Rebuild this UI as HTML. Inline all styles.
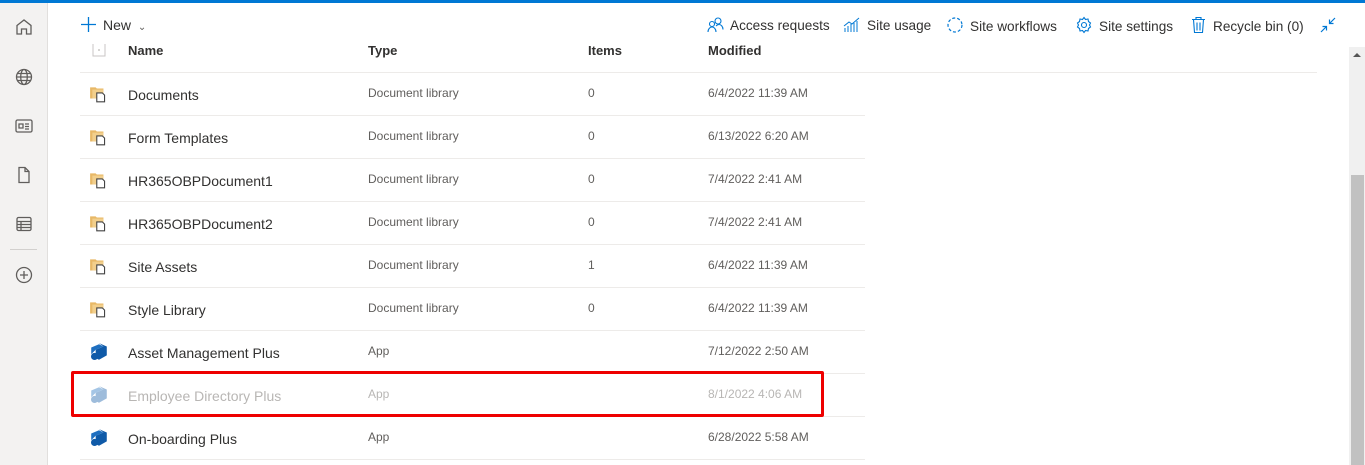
<!DOCTYPE html>
<html><head><style>
*{margin:0;padding:0;box-sizing:border-box}
body{width:1365px;height:465px;overflow:hidden;background:#fff;font-family:"Liberation Sans",Arial,sans-serif;color:#323130;position:relative}
.top{position:absolute;left:0;top:0;width:1365px;height:3px;background:#0078d4}
.side{position:absolute;left:0;top:3px;width:48px;height:462px;background:#f3f2f1;border-right:1px solid #e1dfdd}
.side svg{position:absolute;left:14px}
.cmd{position:absolute;top:16px;font-size:13.6px;color:#323130;white-space:nowrap}
.cmd svg{vertical-align:-3px;margin-right:6px}
.hdr{position:absolute;top:43px;font-size:13px;font-weight:bold;color:#323130}
.line{position:absolute;left:80px;height:1px;background:#edebe9}
.row{position:absolute;left:80px;width:785px;height:43px}
.row .n{position:absolute;left:48px;top:14px;font-size:14px}
.row .t{position:absolute;left:288px;top:13px;font-size:12px;color:#605e5c}
.row .i{position:absolute;left:508px;top:13px;font-size:12px;color:#605e5c}
.row .m{position:absolute;left:628px;top:13px;font-size:12px;color:#605e5c}
.row .ic{position:absolute;left:9px;top:11px}
.dim .n,.dim .t,.dim .m{color:#b8b6b4}
</style></head><body>
<div class="top"></div>
<div class="side">
<svg style="top:14px" width="20" height="20" viewBox="0 0 20 20" fill="none" stroke="#605e5c" stroke-width="1.3"><path d="M3 8.5L10 3l7 5.5V17h-4.5v-5h-5v5H3z"/></svg>
<svg style="top:64px" width="20" height="20" viewBox="0 0 20 20" fill="none" stroke="#605e5c" stroke-width="1.3"><circle cx="10" cy="10" r="7.5"/><ellipse cx="10" cy="10" rx="3.3" ry="7.5"/><path d="M2.5 10h15M3.5 6.5h13M3.5 13.5h13"/></svg>
<svg style="top:113px" width="20" height="20" viewBox="0 0 20 20" fill="none" stroke="#605e5c" stroke-width="1.3"><rect x="2" y="4" width="16" height="12" rx="1.5"/><path d="M5 8h4v4H5zM11 8h4M11 10.5h4M11 13h4"/></svg>
<svg style="top:162px" width="20" height="20" viewBox="0 0 20 20" fill="none" stroke="#605e5c" stroke-width="1.3"><path d="M5 2.5h6l4 4v11H5z"/><path d="M11 2.5v4h4"/></svg>
<svg style="top:211px" width="20" height="20" viewBox="0 0 20 20" fill="none" stroke="#605e5c" stroke-width="1.3"><rect x="3" y="3.5" width="14" height="13" rx="1.5"/><path d="M3 7.5h14M3 10.5h14M3 13.5h14M7 7.5v9"/></svg>
<div style="position:absolute;left:10px;top:246px;width:27px;height:1px;background:#d2d0ce"></div>
<svg style="top:262px" width="20" height="20" viewBox="0 0 20 20" fill="none" stroke="#605e5c" stroke-width="1.3"><circle cx="10" cy="10" r="7.5"/><path d="M10 6v8M6 10h8"/></svg>
</div>
<div class="cmd" style="left:80px;font-size:14px"><svg width="17" height="17" viewBox="0 0 17 17" stroke="#0078d4" stroke-width="1.3"><path d="M8.5 1v15M1 8.5h15"/></svg>New <span style="font-size:10px;color:#605e5c;margin-left:3px">&#8964;</span></div>
<div class="cmd" style="left:707px"><svg width="17" height="17" viewBox="0 0 17 17" fill="none" stroke="#0078d4" stroke-width="1.1"><circle cx="11" cy="5" r="3"/><circle cx="5" cy="8" r="2.5"/><path d="M1 16c0-3 2-5 4-5s4 2 4 5M9 10c1-1 2-1.5 3-1.5 2 0 4 2 4 5"/></svg>Access requests</div>
<div class="cmd" style="left:843px"><svg width="18" height="17" viewBox="0 0 18 17" fill="none" stroke="#0078d4" stroke-width="1"><path d="M2 16v-4M5 16v-6M8 16v-8M11 16v-9M14 16v-11M1 10l5-4 3 2 7-6"/></svg>Site usage</div>
<div class="cmd" style="left:946px"><svg width="18" height="18" viewBox="0 0 18 18" fill="none" stroke="#0078d4" stroke-width="1.2" stroke-dasharray="3 2"><circle cx="9" cy="9" r="7"/></svg>Site workflows</div>
<div class="cmd" style="left:1075px"><svg width="18" height="18" viewBox="0 0 18 18" fill="none" stroke="#0078d4" stroke-width="1.1"><circle cx="9" cy="9" r="2.5"/><path d="M9 1.5l1.5 2 2.5-.5.5 2.5 2 1.5-1 2 1 2-2 1.5-.5 2.5-2.5-.5L9 16.5l-1.5-2-2.5.5-.5-2.5-2-1.5 1-2-1-2 2-1.5.5-2.5 2.5.5z"/></svg>Site settings</div>
<div class="cmd" style="left:1190px"><svg width="17" height="18" viewBox="0 0 17 18" fill="none" stroke="#0078d4" stroke-width="1.1"><path d="M2 3.5h13M6 3.5V1.5h5v2M3.5 3.5l1 13h8l1-13M7 6.5v8M10 6.5v8"/></svg>Recycle bin (0)</div>
<svg style="position:absolute;left:1320px;top:17px" width="16" height="16" viewBox="0 0 16 16" fill="none" stroke="#0078d4" stroke-width="1.2"><path d="M15 1L9.5 6.5M9.5 2.5v4h4M1 15l5.5-5.5M2.5 9.5h4v4"/></svg>

<svg style="position:absolute;left:92px;top:43px" width="14" height="14" viewBox="0 0 14 14" fill="none" stroke="#c8c6c4"><path d="M1 1v12h12V1"/><circle cx="7" cy="7" r=".5" fill="#a00"/></svg>
<div class="hdr" style="left:128px">Name</div>
<div class="hdr" style="left:368px">Type</div>
<div class="hdr" style="left:588px">Items</div>
<div class="hdr" style="left:708px">Modified</div>
<div class="line" style="top:72px;width:1237px"></div>

<div class="row" style="top:73px"><svg class="ic" width="20" height="20" viewBox="0 0 18 18"><path d="M1 3h5l1 1h6v9H1z" fill="#e8b866"/><path d="M3 5h10v8H3z" fill="#f2cf8c"/><path d="M7 8h5l2 2v6H7z" fill="#fff" stroke="#444" stroke-width="1"/></svg><span class="n">Documents</span><span class="t">Document library</span><span class="i">0</span><span class="m">6/4/2022 11:39 AM</span></div>
<div class="line" style="top:115px;width:785px"></div>
<div class="row" style="top:116px"><svg class="ic" width="20" height="20" viewBox="0 0 18 18"><path d="M1 3h5l1 1h6v9H1z" fill="#e8b866"/><path d="M3 5h10v8H3z" fill="#f2cf8c"/><path d="M7 8h5l2 2v6H7z" fill="#fff" stroke="#444" stroke-width="1"/></svg><span class="n">Form Templates</span><span class="t">Document library</span><span class="i">0</span><span class="m">6/13/2022 6:20 AM</span></div>
<div class="line" style="top:158px;width:785px"></div>
<div class="row" style="top:159px"><svg class="ic" width="20" height="20" viewBox="0 0 18 18"><path d="M1 3h5l1 1h6v9H1z" fill="#e8b866"/><path d="M3 5h10v8H3z" fill="#f2cf8c"/><path d="M7 8h5l2 2v6H7z" fill="#fff" stroke="#444" stroke-width="1"/></svg><span class="n">HR365OBPDocument1</span><span class="t">Document library</span><span class="i">0</span><span class="m">7/4/2022 2:41 AM</span></div>
<div class="line" style="top:201px;width:785px"></div>
<div class="row" style="top:202px"><svg class="ic" width="20" height="20" viewBox="0 0 18 18"><path d="M1 3h5l1 1h6v9H1z" fill="#e8b866"/><path d="M3 5h10v8H3z" fill="#f2cf8c"/><path d="M7 8h5l2 2v6H7z" fill="#fff" stroke="#444" stroke-width="1"/></svg><span class="n">HR365OBPDocument2</span><span class="t">Document library</span><span class="i">0</span><span class="m">7/4/2022 2:41 AM</span></div>
<div class="line" style="top:244px;width:785px"></div>
<div class="row" style="top:245px"><svg class="ic" width="20" height="20" viewBox="0 0 18 18"><path d="M1 3h5l1 1h6v9H1z" fill="#e8b866"/><path d="M3 5h10v8H3z" fill="#f2cf8c"/><path d="M7 8h5l2 2v6H7z" fill="#fff" stroke="#444" stroke-width="1"/></svg><span class="n">Site Assets</span><span class="t">Document library</span><span class="i">1</span><span class="m">6/4/2022 11:39 AM</span></div>
<div class="line" style="top:287px;width:785px"></div>
<div class="row" style="top:288px"><svg class="ic" width="20" height="20" viewBox="0 0 18 18"><path d="M1 3h5l1 1h6v9H1z" fill="#e8b866"/><path d="M3 5h10v8H3z" fill="#f2cf8c"/><path d="M7 8h5l2 2v6H7z" fill="#fff" stroke="#444" stroke-width="1"/></svg><span class="n">Style Library</span><span class="t">Document library</span><span class="i">0</span><span class="m">6/4/2022 11:39 AM</span></div>
<div class="line" style="top:330px;width:785px"></div>
<div class="row" style="top:331px"><svg class="ic" width="20" height="20" viewBox="0 0 18 18"><path d="M9 1l7 3v8l-7 4-3-1.5V7l7-3z" fill="#0f5aa8"/><path d="M6 7l7-3-4-2-7 3v6z" fill="#1e6fc0"/><circle cx="5" cy="13" r="3.2" fill="#0f5aa8"/></svg><span class="n">Asset Management Plus</span><span class="t">App</span><span class="m">7/12/2022 2:50 AM</span></div>
<div class="line" style="top:373px;width:785px"></div>
<div class="row dim" style="top:374px"><svg class="ic" width="20" height="20" viewBox="0 0 18 18" opacity=".4"><path d="M9 1l7 3v8l-7 4-3-1.5V7l7-3z" fill="#0f5aa8"/><path d="M6 7l7-3-4-2-7 3v6z" fill="#1e6fc0"/><circle cx="5" cy="13" r="3.2" fill="#0f5aa8"/></svg><span class="n">Employee Directory Plus</span><span class="t">App</span><span class="m">8/1/2022 4:06 AM</span></div>
<div class="line" style="top:416px;width:785px"></div>
<div class="row" style="top:417px"><svg class="ic" width="20" height="20" viewBox="0 0 18 18"><path d="M9 1l7 3v8l-7 4-3-1.5V7l7-3z" fill="#0f5aa8"/><path d="M6 7l7-3-4-2-7 3v6z" fill="#1e6fc0"/><circle cx="5" cy="13" r="3.2" fill="#0f5aa8"/></svg><span class="n">On-boarding Plus</span><span class="t">App</span><span class="m">6/28/2022 5:58 AM</span></div>
<div class="line" style="top:459px;width:785px"></div>

<div style="position:absolute;left:71px;top:371px;width:753px;height:46px;border:3px solid #e00;border-radius:2px"></div>

<div style="position:absolute;left:1349px;top:47px;width:16px;height:418px;background:#f0f0f0"></div>
<div style="position:absolute;left:1353px;top:53px;width:0;height:0;border-left:4px solid transparent;border-right:4px solid transparent;border-bottom:4px solid #555"></div>
<div style="position:absolute;left:1351px;top:175px;width:13px;height:290px;background:#c1c1c1"></div>
</body></html>
